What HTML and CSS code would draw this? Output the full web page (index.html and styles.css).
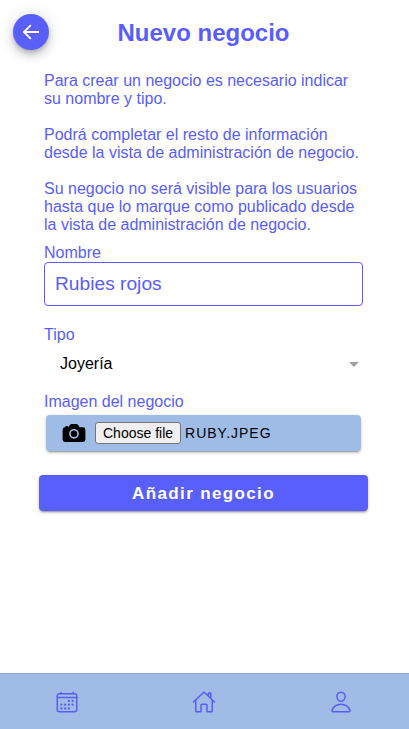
FILE: index.html
```html
<!DOCTYPE html>
<html lang="es">
<head>
<meta charset="utf-8">
<title>Nuevo negocio</title>
<link rel="stylesheet" href="styles.css">
</head>
<body>
<header class="header">
  <button class="back" aria-label="Volver"><svg viewBox="0 0 24 24"><path d="M20 12H5M11.8 5.2L5 12l6.800 6.800"/></svg></button>
  <h1>Nuevo negocio</h1>
</header>
<main class="content">
  <p>Para crear un negocio es necesario indicar su nombre y tipo.</p>
  <p>Podrá completar el resto de información desde la vista de administración de negocio.</p>
  <p>Su negocio no será visible para los usuarios hasta que lo marque como publicado desde la vista de administración de negocio.</p>
  <label class="label" for="name">Nombre</label>
  <input class="field" id="name" value="Rubies rojos">
  <div class="label label-type">Tipo</div>
  <div class="select"><span>Joyería</span><i class="caret"></i></div>
  <div class="label">Imagen del negocio</div>
  <div class="upload">
    <svg viewBox="0 0 512 512"><circle cx="256" cy="272" r="64"/><path d="M432 144h-59c-3 0-6.720-1.940-9.620-5l-25.940-40.940a15.520 15.520 0 00-1.370-1.850C327.110 85.760 315 80 302 80h-92c-13 0-25.110 5.760-34.070 16.210a15.520 15.520 0 00-1.370 1.850l-25.940 41c-2.220 2.420-5.340 5-8.620 5v-8a16 16 0 00-16-16h-24a16 16 0 00-16 16v8h-4a48.050 48.050 0 00-48 48V384a48.050 48.050 0 0048 48h352a48.050 48.050 0 0048-48V192a48.050 48.050 0 00-48-48zM256 368a96 96 0 1196-96 96.110 96.110 0 01-96 96z"/></svg>
    <span class="choose">Choose file</span>
    <span class="filename">RUBY.JPEG</span>
  </div>
</main>
<button class="submit">Añadir negocio</button>
<nav class="tabs">
  <a><svg viewBox="0 0 512 512"><rect x="48" y="80" width="416" height="384" rx="48"/><path d="M128 48v32M384 48v32M464 160H48"/><g class="dots"><circle cx="296" cy="232" r="24"/><circle cx="376" cy="232" r="24"/><circle cx="136" cy="312" r="24"/><circle cx="216" cy="312" r="24"/><circle cx="296" cy="312" r="24"/><circle cx="376" cy="312" r="24"/><circle cx="136" cy="392" r="24"/><circle cx="216" cy="392" r="24"/><circle cx="296" cy="392" r="24"/></g></svg></a>
  <a><svg viewBox="0 0 512 512"><path d="M80 212v236a16 16 0 0016 16h96V328a24 24 0 0124-24h80a24 24 0 0124 24v136h96a16 16 0 0016-16V212"/><path d="M480 256L266.890 52c-5-5.280-16.690-5.340-21.780 0L32 256M400 179V64h-48v69"/></svg></a>
  <a><svg viewBox="0 0 512 512"><path d="M344 144c-3.920 52.870-44 96-88 96s-84.150-43.120-88-96c-4-55 35-96 88-96s92 42 88 96z"/><path d="M256 304c-87 0-175.300 48-191.640 138.600C62.390 453.520 68.570 464 80 464h352c11.440 0 17.620-10.480 15.650-21.400C431.300 352 343 304 256 304z"/></svg></a>
</nav>
</body>
</html>
```
FILE: styles.css
```css
* { box-sizing: border-box; }
body {
  margin: 0;
  height: 729px;
  display: flex;
  flex-direction: column;
  overflow: hidden;
  background: #fff;
  color: #595dfc;
  font: 16px/18px "Liberation Sans", Arial, sans-serif;
}
.header {
  display: grid;
  grid-template-columns: 36px 1fr 36px;
  align-items: center;
  height: 64px;
  padding: 0 15px 0 13px;
}
.back {
  width: 36px;
  height: 36px;
  padding: 0;
  border: 0;
  border-radius: 50%;
  background: #595ffd;
  display: grid;
  place-items: center;
  box-shadow: 0 3px 5px -1px rgba(0,0,0,.2), 0 6px 10px rgba(0,0,0,.14), 0 1px 18px rgba(0,0,0,.12);
}
.back svg { width: 24px; height: 24px; margin-right: 1px; fill: none; stroke: #fff; stroke-width: 1.9; stroke-linecap: butt; stroke-linejoin: miter; }
h1 { margin: 2px 0 0; font-size: 24px; line-height: 28px; text-align: center; }
.content { margin: 8px 46px 0 44px; }
.content p { margin: 0 -4px 18px 0; }
.content p:nth-of-type(3) { margin-bottom: 10px; }
.label { display: block; }
.field {
  display: block;
  width: 319px;
  height: 44px;
  padding: 0 10px;
  border: 1px solid #595dfc;
  border-radius: 4px;
  background: #fff;
  color: #595dfc;
  font: 19.2px "Liberation Sans", Arial, sans-serif;
  outline: 0;
}
.label-type { margin-top: 20px; }
.select { display: flex; align-items: center; justify-content: space-between; height: 39px; margin-bottom: 10px; padding: 1px 4px 0 16px; color: #000; }
.caret { border: 5px solid transparent; border-top-color: #a1a1a1; border-bottom: 0; }
.upload {
  display: flex;
  align-items: center;
  width: 315px;
  height: 36px;
  margin: 4px 0 0 2px;
  padding-left: 15px;
  border-radius: 4px;
  background: #9ebce6;
  color: #000;
  box-shadow: 0 3px 1px -2px rgba(0,0,0,.2), 0 2px 2px rgba(0,0,0,.14), 0 1px 5px rgba(0,0,0,.12);
}
.upload svg { width: 26px; height: 26px; margin-right: 8px; }
.choose { height: 22px; padding: 0 7px; border: 1px solid #767676; border-radius: 3px; background: #efefef; font-size: 14px; line-height: 20px; white-space: nowrap; }
.filename { margin-left: 4px; font-size: 14px; letter-spacing: 1px; }
.submit {
  width: 329px;
  height: 36px;
  margin: 24px 0 0 39px;
  padding: 1px 0 0;
  border: 0;
  border-radius: 4px;
  background: #595ffd;
  color: #fff;
  font: bold 17px "Liberation Sans", Arial, sans-serif;
  letter-spacing: 1.36px;
  box-shadow: 0 3px 1px -2px rgba(0,0,0,.2), 0 2px 2px rgba(0,0,0,.14), 0 1px 5px rgba(0,0,0,.12);
}
.tabs { display: grid; grid-template-columns: 134px 140px 134px; flex-shrink: 0; height: 56px; margin-top: auto; border-top: 1px solid #8ea9cf; background: #9ebce6; }
.tabs a { display: grid; place-items: center; padding-top: 1px; }
.tabs svg { width: 24px; height: 24px; fill: none; stroke: #595dfc; stroke-width: 32; stroke-linecap: round; stroke-linejoin: round; }
.dots { fill: #595dfc; stroke: none; }
```
